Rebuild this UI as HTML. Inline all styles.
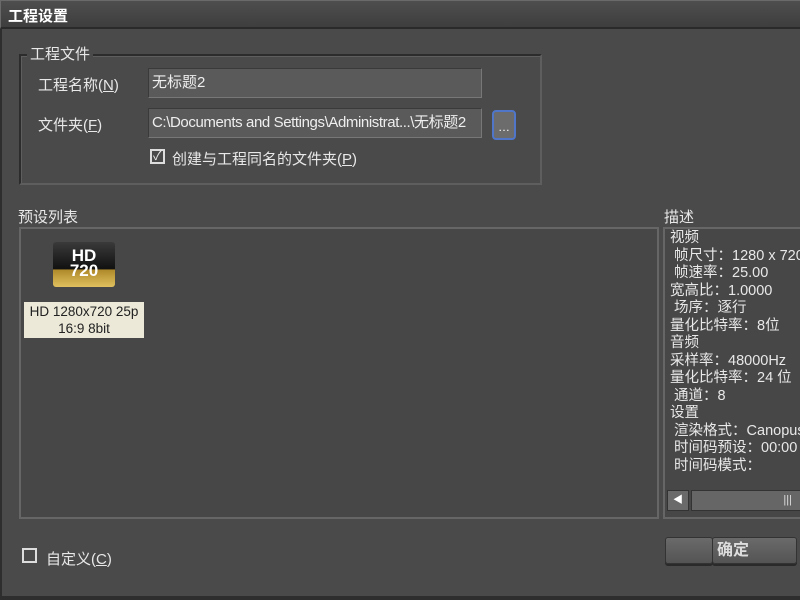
<!DOCTYPE html>
<html><head><meta charset="utf-8"><style>
*{margin:0;padding:0;box-sizing:border-box}
body{width:800px;height:600px;background:#4a4a4a;overflow:hidden;position:relative;font-family:"Liberation Sans","Noto Sans CJK SC",sans-serif;font-size:14px;color:#e8e8e8}
.a{position:absolute;white-space:nowrap}
.title{left:0;top:0;width:800px;height:29px;background:linear-gradient(#4e4e4e,#3e3e3e);border-bottom:2px solid #2a2a2a;border-top:1px solid #6a6a6a;border-left:1px solid #6a6a6a}
.inp{background:#5a5a5a;border:1px solid #3a3a3a;border-bottom-color:#777;border-right-color:#777;padding-left:3px;line-height:28px;color:#eee}
.box{border:2px solid #666;background:#474747}
u{text-decoration:underline}
.cb{width:15px;height:15px;border:2px solid #ddd}
.desc div{height:17.5px;line-height:17.5px;font-size:14.5px}
.btn{background:linear-gradient(#6a6a6a,#545454);border:1px solid #333;border-radius:3px;box-shadow:0 2px 0 #2a2a2a}
</style></head><body>
<div class="a title"></div>
<div class="a" style="left:8px;top:5px;font-size:15px;font-weight:bold;color:#fff">工程设置</div>
<div class="a" style="left:0;top:29px;width:2px;height:571px;background:#2e2e2e"></div>
<div class="a" style="left:0;top:596px;width:800px;height:4px;background:#2e2e2e"></div>

<div class="a" style="left:19px;top:54px;width:523px;height:131px;border:2px solid #2c2c2c;border-right-color:#5e5e5e;border-bottom-color:#5e5e5e;box-shadow:inset 1px 1px 0 #5e5e5e"></div>
<div class="a" style="left:27px;top:43px;padding:0 3px;background:#4a4a4a;font-size:15px">工程文件</div>
<div class="a" style="left:38px;top:74px;font-size:15px">工程名称(<u>N</u>)</div>
<div class="a" style="left:38px;top:114px;font-size:15px">文件夹(<u>F</u>)</div>
<div class="a inp" style="left:148px;top:68px;width:334px;height:30px;font-size:15px">无标题2</div>
<div class="a inp" style="left:148px;top:108px;width:334px;height:30px;font-size:15px;letter-spacing:-0.4px;overflow:hidden">C:\Documents and Settings\Administrat...\无标题2</div>
<div class="a" style="left:492px;top:110px;width:24px;height:30px;background:#6c6c6c;border:2px solid #4f76c8;border-radius:4px;color:#fff;font-size:12px;text-align:center;line-height:30px">…</div>
<div class="a cb" style="left:150px;top:149px;font-size:13px;line-height:10px;text-align:center">✓</div>
<div class="a" style="left:172px;top:148px;font-size:15px">创建与工程同名的文件夹(<u>P</u>)</div>

<div class="a" style="left:18px;top:206px;font-size:15px">预设列表</div>
<div class="a box" style="left:19px;top:227px;width:640px;height:292px"></div>
<div class="a" style="left:53px;top:242px;width:62px;height:45px;border-radius:3px;background:linear-gradient(#3a3a3a 0%,#111 60%,#b08a2a 62%,#e0c060 100%);color:#fff;font-weight:bold;font-size:17px;line-height:15px;text-align:center;padding-top:6px">HD<br>720</div>
<div class="a" style="left:24px;top:302px;width:120px;height:36px;background:#ece9d8;color:#222;font-size:13.5px;line-height:17px;text-align:center;padding-top:1px">HD 1280x720 25p<br>16:9 8bit</div>

<div class="a" style="left:664px;top:206px;font-size:15px">描述</div>
<div class="a box" style="left:663px;top:227px;width:140px;height:292px"></div>
<div class="a desc" style="left:670px;top:230px">
<div>视频</div><div>&nbsp;帧尺寸：1280 x 720</div><div>&nbsp;帧速率：25.00</div><div>宽高比：1.0000</div><div>&nbsp;场序：逐行</div><div>量化比特率：8位</div><div>音频</div><div>采样率：48000Hz</div><div>量化比特率：24 位</div><div>&nbsp;通道：8</div><div>设置</div><div>&nbsp;渲染格式：Canopus</div><div>&nbsp;时间码预设：00:00</div><div>&nbsp;时间码模式：</div>
</div>
<div class="a" style="left:667px;top:490px;width:22px;height:21px;background:#6a6a6a;border:1px solid #333;color:#fff;font-size:10px;text-align:center;line-height:19px">◀</div>
<div class="a" style="left:691px;top:490px;width:110px;height:21px;background:#666;border:1px solid #333;color:#ddd;font-size:11px;text-align:right;padding-right:8px;line-height:19px">|||</div>

<div class="a cb" style="left:22px;top:548px"></div>
<div class="a" style="left:46px;top:548px;font-size:15px">自定义(<u>C</u>)</div>
<div class="a btn" style="left:665px;top:537px;width:48px;height:27px"></div>
<div class="a btn" style="left:712px;top:537px;width:85px;height:27px;color:#ddd;font-weight:bold;font-size:16px;text-align:left;padding-left:4px;line-height:26px">确定</div>
</body></html>
